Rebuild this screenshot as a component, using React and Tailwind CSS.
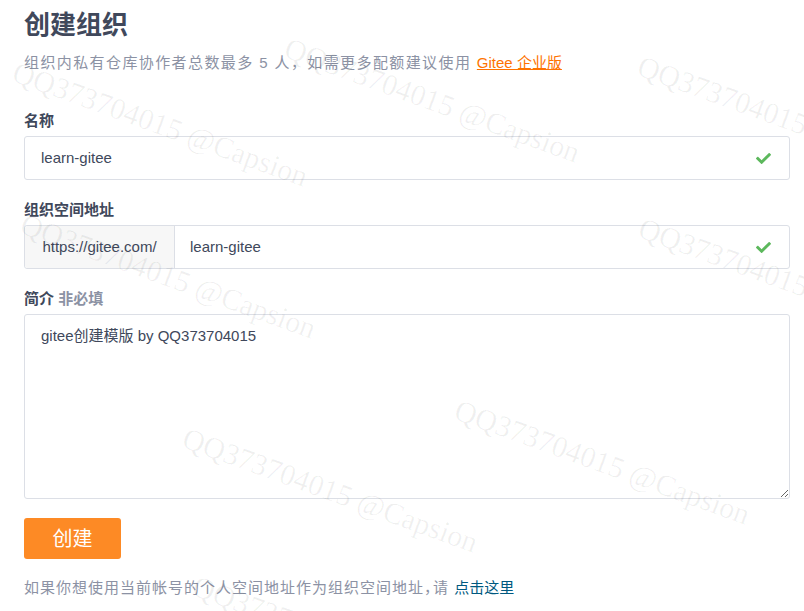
import React, { useState } from "react";
import { FaCheck } from "react-icons/fa";

const font = { fontFamily: '"Liberation Sans", "Noto Sans CJK SC", sans-serif' };

// watermark positions (top-left of the first Q)
const marks = [
  { left: 20, top: 54 },
  { left: 292, top: 30 },
  { left: 645, top: 48 },
  { left: 28, top: 206 },
  { left: 646, top: 210 },
  { left: 190, top: 420 },
  { left: 462, top: 392 },
  { left: 200, top: 568 },
];

function Watermarks() {
  return (
    <div className="pointer-events-none absolute inset-0 overflow-hidden">
      {marks.map((m, i) => (
        <div
          key={i}
          className="absolute origin-top-left rotate-[20deg] whitespace-nowrap font-['Liberation_Serif',serif] text-[30px] leading-[36px] text-black/[0.06]"
          style={{ left: m.left, top: m.top }}
        >
          QQ373704015 @Capsion
        </div>
      ))}
    </div>
  );
}

export default function App() {
  const [form, setForm] = useState({
    name: "learn-gitee",
    path: "learn-gitee",
    desc: "gitee创建模版 by QQ373704015",
  });

  return (
    <div className="relative h-[611px] w-[804px] overflow-hidden bg-white" style={font}>
      <div className="flex flex-col pl-6 pr-[14px] pt-2">
        <h1 className="text-[26px] font-bold leading-[34px] text-[#40485b]">创建组织</h1>
        <p className="mt-[9px] text-[15px] leading-6 tracking-[1.4px] text-[#8c92a4]">
          组织内私有仓库协作者总数最多 5 人，如需更多配额建议使用{" "}
          <a href="#" className="tracking-normal text-[#fe7300] underline">Gitee 企业版</a>
        </p>

        <label className="mt-9 text-[15px] font-bold leading-5 text-[#40485b]">名称</label>
        <div className="mt-[5px] flex h-[44px] items-center rounded-[3px] border border-[#dcdfe6] pl-4 pr-[18px]">
          <input
            className="flex-1 bg-transparent text-[15px] text-[#40485b] outline-none"
            value={form.name}
            onChange={(e) => setForm((f) => ({ ...f, name: e.target.value }))}
          />
          <FaCheck className="text-[15px] text-[#5cb85c]" />
        </div>

        <label className="mt-5 text-[15px] font-bold leading-5 text-[#40485b]">组织空间地址</label>
        <div className="mt-[5px] flex h-[44px] items-stretch rounded-[3px] border border-[#dcdfe6]">
          <div className="flex w-[150px] items-center justify-center rounded-l-[3px] border-r border-[#dcdfe6] bg-[#f7f7f7] text-[15px] text-[#40485b]">
            https://gitee.com/
          </div>
          <div className="flex flex-1 items-center pl-[15px] pr-[18px]">
            <input
              className="flex-1 bg-transparent text-[15px] text-[#40485b] outline-none"
              value={form.path}
              onChange={(e) => setForm((f) => ({ ...f, path: e.target.value }))}
            />
            <FaCheck className="text-[15px] text-[#5cb85c]" />
          </div>
        </div>

        <label className="mt-5 text-[15px] font-bold leading-5 text-[#40485b]">
          简介 <span className="text-[#8c92a4]">非必填</span>
        </label>
        <textarea
          className="mt-[5px] h-[185px] rounded-[3px] border border-[#dcdfe6] px-4 py-[9px] text-[15px] leading-6 text-[#40485b] outline-none"
          value={form.desc}
          onChange={(e) => setForm((f) => ({ ...f, desc: e.target.value }))}
        />

        <div className="mt-[19px]">
          <button className="h-[41px] w-[97px] rounded-[3px] bg-[#fd8a25] text-[20px] text-white">创建</button>
        </div>

        <p className="mt-[17px] text-[15px] leading-6 tracking-[1px] text-[#8c92a4]">
          如果你想使用当前帐号的个人空间地址作为组织空间地址<span className="tracking-[-6px]">，</span>请{" "}
          <a href="#" className="tracking-normal text-[#005980]">点击这里</a>
        </p>
      </div>
      <Watermarks />
    </div>
  );
}
